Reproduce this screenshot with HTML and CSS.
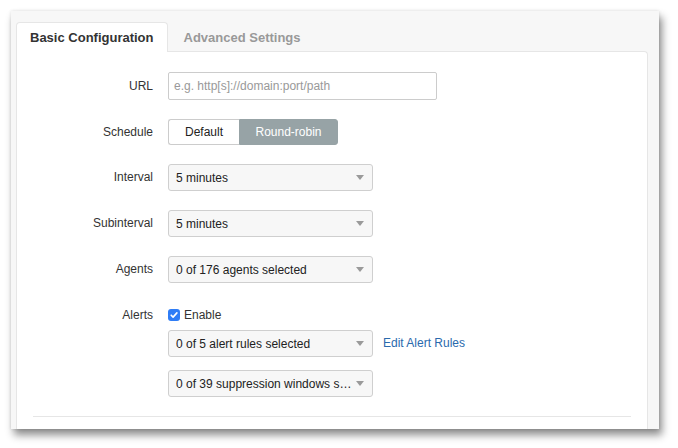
FILE: index.html
```html
<!DOCTYPE html>
<html>
<head>
<meta charset="utf-8">
<link rel="stylesheet" href="styles.css">
</head>
<body>
<div class="window">
  <div class="tabs">
    <div class="tab active">Basic Configuration</div>
    <div class="tab">Advanced Settings</div>
  </div>
  <div class="card">
    <div class="row">
      <div class="label lh28">URL</div>
      <div class="ctrl"><div class="input">e.g. http[s]://domain:port/path</div></div>
    </div>
    <div class="row">
      <div class="label lh26">Schedule</div>
      <div class="ctrl">
        <div class="btn-group">
          <div class="seg">Default</div>
          <div class="seg on">Round-robin</div>
        </div>
      </div>
    </div>
    <div class="row">
      <div class="label lh27">Interval</div>
      <div class="ctrl"><div class="select"><span class="val">5 minutes</span><span class="caret"></span></div></div>
    </div>
    <div class="row">
      <div class="label lh27">Subinterval</div>
      <div class="ctrl"><div class="select"><span class="val">5 minutes</span><span class="caret"></span></div></div>
    </div>
    <div class="row">
      <div class="label lh27">Agents</div>
      <div class="ctrl"><div class="select"><span class="val">0 of 176 agents selected</span><span class="caret"></span></div></div>
    </div>
    <div class="row alerts">
      <div class="label lh20">Alerts</div>
      <div class="ctrl stack">
        <div class="check-line">
          <span class="checkbox"><svg width="12" height="12" viewBox="0 0 12 12"><path d="M3.2 6.2 L5.1 8.1 L8.9 3.9" fill="none" stroke="#fff" stroke-width="1.6" stroke-linecap="round" stroke-linejoin="round"/></svg></span>
          <span>Enable</span>
        </div>
        <div class="sel-line first">
          <div class="select"><span class="val">0 of 5 alert rules selected</span><span class="caret"></span></div>
          <a class="link">Edit Alert Rules</a>
        </div>
        <div class="sel-line second">
          <div class="select"><span class="val">0 of 39 suppression windows s…</span><span class="caret"></span></div>
        </div>
      </div>
    </div>
    <div class="sep"></div>
  </div>
</div>
</body>
</html>
```
FILE: styles.css
```css
html, body {
  margin: 0;
  padding: 0;
  background: #ffffff;
}
body {
  font-family: "Liberation Sans", Arial, sans-serif;
  font-size: 12px;
  color: #333333;
  width: 678px;
  height: 448px;
  overflow: hidden;
}
.window {
  margin: 11px 0 0 11px;
  width: 648px;
  height: 418px;
  background: #f7f7f7;
  box-shadow: 0 0 3px rgba(0,0,0,0.12), 3px 6px 8px rgba(0,0,0,0.45);
  padding: 11px 11px 0 5px;
  box-sizing: border-box;
  overflow: hidden;
  display: flex;
  flex-direction: column;
}
.tabs {
  display: flex;
  height: 30px;
  margin-bottom: -1px;
  position: relative;
  z-index: 1;
}
.tab {
  padding: 0 13px;
  line-height: 29px;
  font-size: 13px;
  font-weight: bold;
  color: #999999;
  border: 1px solid transparent;
  border-bottom: none;
  margin-left: 2px;
}
.tab.active {
  margin-left: 0;
  background: #ffffff;
  color: #333333;
  border-color: #e6e6e6;
  border-radius: 4px 4px 0 0;
  height: 30px;
  box-sizing: border-box;
  line-height: 29px;
}
.card {
  flex: 1;
  background: #ffffff;
  border: 1px solid #e6e6e6;
  border-bottom: none;
  border-radius: 0 4px 0 0;
  padding: 20px 16px 0 0;
}
.row {
  display: flex;
  align-items: flex-start;
  margin-bottom: 19px;
}
.label {
  width: 136px;
  text-align: right;
  margin-right: 15px;
  flex: none;
}
.lh28 { line-height: 28px; }
.lh26 { line-height: 26px; }
.lh27 { line-height: 27px; }
.lh20 { line-height: 20px; }
.input {
  width: 269px;
  height: 28px;
  box-sizing: border-box;
  border: 1px solid #cccccc;
  border-radius: 2px;
  padding-left: 5px;
  line-height: 26px;
  color: #999999;
}
.btn-group {
  display: flex;
  height: 26px;
}
.seg {
  box-sizing: border-box;
  height: 26px;
  line-height: 24px;
  text-align: center;
  border: 1px solid #cccccc;
}
.seg:first-child {
  width: 71px;
  border-radius: 3px 0 0 3px;
  border-right: none;
  color: #222222;
}
.seg.on {
  width: 99px;
  background: #97a3a6;
  border-color: #97a3a6;
  color: #ffffff;
  border-radius: 0 3px 3px 0;
}
.select {
  width: 205px;
  height: 27px;
  box-sizing: border-box;
  border: 1px solid #cfcfcf;
  border-radius: 3px;
  background: #f7f7f7;
  display: flex;
  align-items: center;
  padding: 0 8px 0 7px;
  color: #222222;
}
.val {
  flex: 1;
  white-space: nowrap;
  overflow: hidden;
}
.caret {
  width: 0;
  height: 0;
  border-left: 4.5px solid transparent;
  border-right: 4.5px solid transparent;
  border-top: 5px solid #9a9a9a;
  margin-left: 4px;
}
.alerts {
  margin-top: 22px;
}
.stack {
  display: flex;
  flex-direction: column;
}
.check-line {
  display: flex;
  align-items: center;
  height: 20px;
  gap: 4px;
}
.checkbox {
  width: 12px;
  height: 12px;
  border-radius: 3px;
  background: #2f7df6;
  display: inline-flex;
}
.sel-line {
  display: flex;
  align-items: center;
}
.sel-line.first { margin-top: 5px; }
.sel-line.second { margin-top: 13px; }
.link {
  margin-left: 10px;
  color: #2a6aad;
  margin-top: -2px;
}
.sep {
  margin: 0 0 0 16px;
  height: 1px;
  background: #e6e6e6;
}
```
